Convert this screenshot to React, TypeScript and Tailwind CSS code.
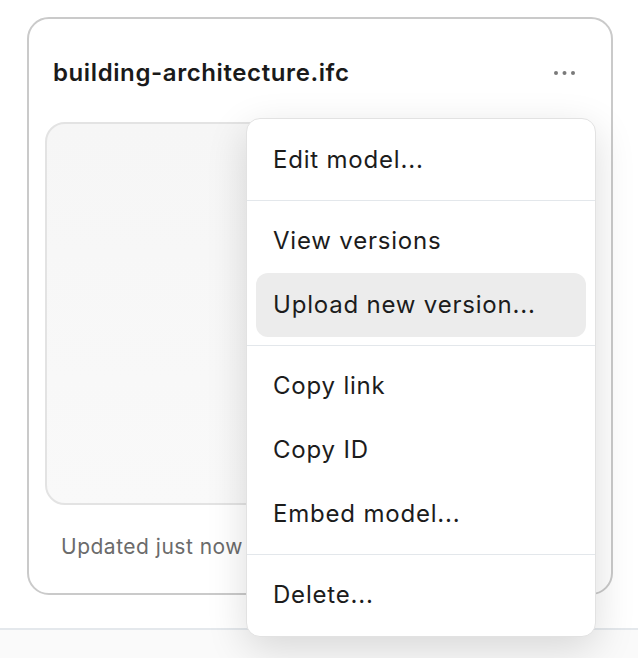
const MENU: (string | null)[] = [
  'Edit model...',
  null,
  'View versions',
  'Upload new version...',
  null,
  'Copy link',
  'Copy ID',
  'Embed model...',
  null,
  'Delete...',
];

function Dots() {
  return (
    <svg width="26" height="8" viewBox="0 0 26 8" className="text-[#7a7a7a]">
      <circle cx="4" cy="4" r="2" fill="currentColor" />
      <circle cx="12.5" cy="4" r="2" fill="currentColor" />
      <circle cx="21" cy="4" r="2" fill="currentColor" />
    </svg>
  );
}

export default function App() {
  return (
    <div className="relative min-h-[658px] flex flex-col bg-white font-['Inter','Liberation_Sans',sans-serif]">
      <div className="pt-[17px] pl-[27px] pb-[33px]">
        {/* Model card */}
        <div className="w-[586px] h-[578px] rounded-[22px] border-2 border-[#cacaca] bg-white flex flex-col">
          <div className="flex items-center justify-between pl-[24px] pr-[33px] pt-[38px] pb-[33px]">
            <h2 className="text-[24px] leading-[32px] font-semibold tracking-[0.6px] text-[#1a1a1a]">building-architecture.ifc</h2>
            <button className="h-[32px] flex items-center">
              <Dots />
            </button>
          </div>
          <div className="mx-[16px] h-[383px] rounded-[20px] border-2 border-[#e3e3e3] bg-gradient-to-b from-[#f6f6f6] to-[#f9f9f9]" />
          <p className="mt-[28px] pl-[32px] text-[21px] leading-[28px] tracking-[0.5px] text-[#6b6b6b]">Updated just now</p>
        </div>
      </div>
      <div className="flex-1 border-t-2 border-[#e4e8ec] bg-[#fafafa]" />

      {/* Dropdown menu */}
      <div className="absolute left-[246px] top-[118px] w-[350px] rounded-[14px] border border-[#e2e2e2] bg-white p-[9px] shadow-[0_12px_40px_rgba(0,0,0,0.14)]">
        {MENU.map((item, i) =>
          item === null ? (
            <div key={i} className="-mx-[9px] my-[8px] h-px bg-[#e3e7eb]" />
          ) : (
            <div
              key={i}
              className={`h-[64px] flex items-center px-[17px] rounded-[12px] text-[24px] tracking-[0.8px] text-[#1c1c1c] ${
                item === 'Upload new version...' ? 'bg-[#ececec]' : ''
              }`}
            >
              {item}
            </div>
          )
        )}
      </div>
    </div>
  );
}
